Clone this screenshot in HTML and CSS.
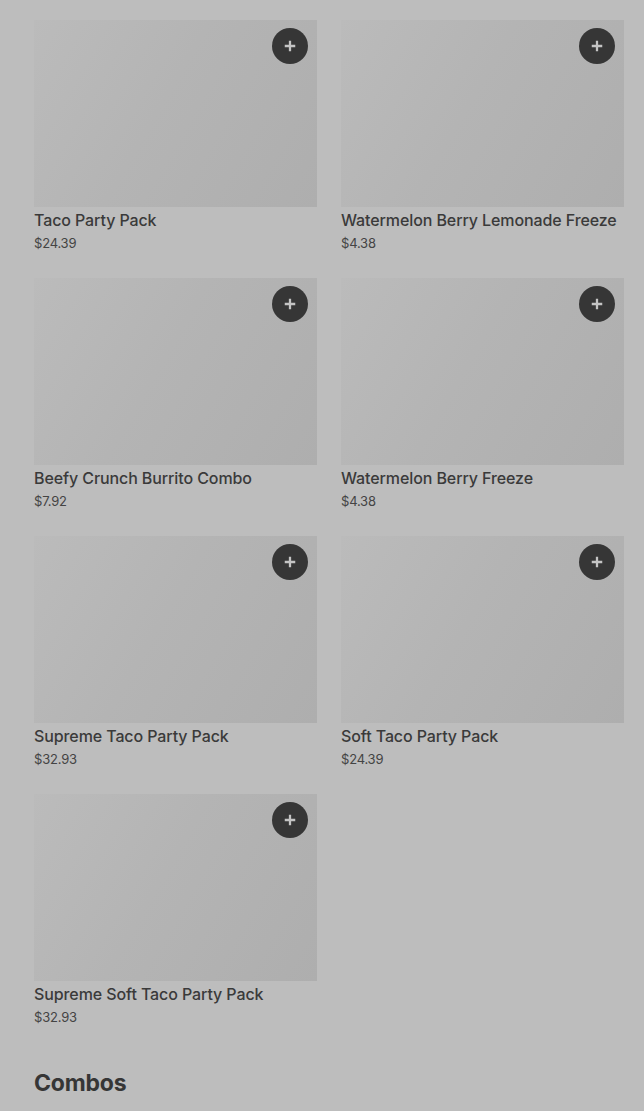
FILE: index.html
```
<!DOCTYPE html>
<html lang="en">
<head>
    <meta charset="UTF-8">
    <meta name="viewport" content="width=device-width, initial-scale=1.0">
    <title>Menu - Party Packs</title>
    <link rel="stylesheet" href="styles.css">
</head>
<body>
    <div class="menu-grid">
        <div class="menu-item">
            <div class="item-image"><button class="add-btn"><svg viewBox="0 0 16 16"><path d="M8 2v12M2 8h12"/></svg></button></div>
            <div class="item-name">Taco Party Pack</div>
            <div class="item-price">$24.39</div>
        </div>
        <div class="menu-item">
            <div class="item-image"><button class="add-btn"><svg viewBox="0 0 16 16"><path d="M8 2v12M2 8h12"/></svg></button></div>
            <div class="item-name">Watermelon Berry Lemonade Freeze</div>
            <div class="item-price">$4.38</div>
        </div>
        <div class="menu-item">
            <div class="item-image"><button class="add-btn"><svg viewBox="0 0 16 16"><path d="M8 2v12M2 8h12"/></svg></button></div>
            <div class="item-name">Beefy Crunch Burrito Combo</div>
            <div class="item-price">$7.92</div>
        </div>
        <div class="menu-item">
            <div class="item-image"><button class="add-btn"><svg viewBox="0 0 16 16"><path d="M8 2v12M2 8h12"/></svg></button></div>
            <div class="item-name">Watermelon Berry Freeze</div>
            <div class="item-price">$4.38</div>
        </div>
        <div class="menu-item">
            <div class="item-image"><button class="add-btn"><svg viewBox="0 0 16 16"><path d="M8 2v12M2 8h12"/></svg></button></div>
            <div class="item-name">Supreme Taco Party Pack</div>
            <div class="item-price">$32.93</div>
        </div>
        <div class="menu-item">
            <div class="item-image"><button class="add-btn"><svg viewBox="0 0 16 16"><path d="M8 2v12M2 8h12"/></svg></button></div>
            <div class="item-name">Soft Taco Party Pack</div>
            <div class="item-price">$24.39</div>
        </div>
        <div class="menu-item">
            <div class="item-image"><button class="add-btn"><svg viewBox="0 0 16 16"><path d="M8 2v12M2 8h12"/></svg></button></div>
            <div class="item-name">Supreme Soft Taco Party Pack</div>
            <div class="item-price">$32.93</div>
        </div>
    </div>

    <h2 class="section-title">Combos</h2>
</body>
</html>
```

FILE: styles.css
```
body {
    margin: 0;
    padding: 0;
    background: #bdbdbd;
    font-family: Inter, "Noto Sans", sans-serif;
    color: #3a3a3a;
}

.menu-grid {
    display: grid;
    grid-template-columns: 283px 283px;
    column-gap: 24px;
    row-gap: 26px;
    padding: 20px 0 0 34px;
}

.menu-item {
    display: flex;
    flex-direction: column;
}

.item-image {
    position: relative;
    height: 187px;
    background: linear-gradient(120deg, #bbbbbb 0%, #b4b4b4 45%, #aeaeae 100%);
}

.add-btn {
    position: absolute;
    top: 8px;
    right: 9px;
    width: 36px;
    height: 36px;
    border-radius: 50%;
    border: none;
    padding: 0;
    background: #363636;
    display: flex;
    align-items: center;
    justify-content: center;
    cursor: pointer;
}

.add-btn svg {
    width: 14px;
    height: 14px;
    stroke: #c4c4c4;
    stroke-width: 2.6;
    fill: none;
}

.item-name {
    margin-top: 3px;
    font-size: 16px;
    line-height: 20px;
    font-weight: 500;
    letter-spacing: -0.1px;
    white-space: nowrap;
}

.item-price {
    margin-top: 4px;
    font-size: 13px;
    line-height: 18px;
    letter-spacing: -0.2px;
    color: #444;
}

.section-title {
    margin: 43px 0 0 34px;
    font-size: 23px;
    font-weight: 700;
    letter-spacing: -0.2px;
    color: #363636;
}
```
